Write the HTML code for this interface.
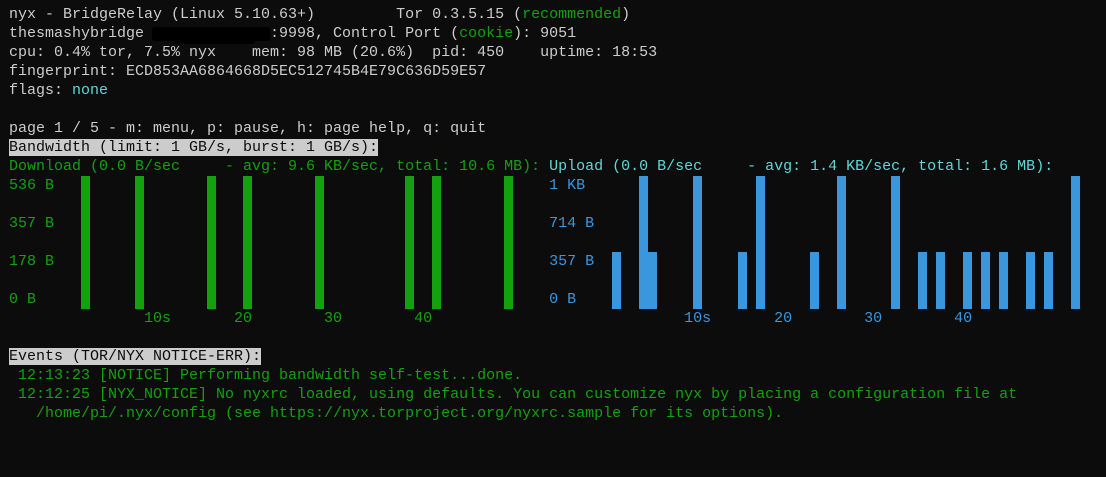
<!DOCTYPE html>
<html><head><meta charset="utf-8"><style>
html,body{margin:0;padding:0;background:#0c0c0c;width:1106px;height:477px;overflow:hidden}
pre{position:absolute;left:9px;top:5px;margin:0;font-family:"Liberation Mono",monospace;font-size:15px;line-height:19px;color:#cccccc;letter-spacing:0}
.g{color:#13a10e}.t{color:#61d6d6}.b{color:#3a96dd}
.hl{background:#cccccc;color:#0c0c0c}
.bar{position:absolute;width:9px}
.gb{background:#13a10e;top:176px;height:133px}
.bt{background:#3a96dd;top:176px;height:133px}
.bs{background:#3a96dd;top:252px;height:57px}
</style></head><body>
<pre>nyx - BridgeRelay (Linux 5.10.63+)         Tor 0.3.5.15 (<span class="g">recommended</span>)
thesmashybridge              :9998, Control Port (<span class="g">cookie</span>): 9051
cpu: 0.4% tor, 7.5% nyx    mem: 98 MB (20.6%)  pid: 450    uptime: 18:53
fingerprint: ECD853AA6864668D5EC512745B4E79C636D59E57
flags: <span class="t">none</span>

page 1 / 5 - m: menu, p: pause, h: page help, q: quit
<span class="hl">Bandwidth (limit: 1 GB/s, burst: 1 GB/s):</span>
<span class="g">Download (0.0 B/sec     - avg: 9.6 KB/sec, total: 10.6 MB):</span> <span class="t">Upload (0.0 B/sec     - avg: 1.4 KB/sec, total: 1.6 MB):</span>
<span class="g">536 B</span>                                                       <span class="b">1 KB</span>

<span class="g">357 B</span>                                                       <span class="b">714 B</span>

<span class="g">178 B</span>                                                       <span class="b">357 B</span>

<span class="g">0 B</span>                                                         <span class="b">0 B</span>
<span class="g">               10s       20        30        40</span>                            <span class="b">10s       20        30        40</span>

<span class="hl">Events (TOR/NYX NOTICE-ERR):</span>
<span class="g"> 12:13:23 [NOTICE] Performing bandwidth self-test...done.</span>
<span class="g"> 12:12:25 [NYX_NOTICE] No nyxrc loaded, using defaults. You can customize nyx by placing a configuration file at</span>
<span class="g">   /home/pi/.nyx/config (see https://nyx.torproject.org/nyxrc.sample for its options).</span></pre>
<div style="position:absolute;left:152px;top:27px;width:118px;height:14px;background:#000;border-radius:3px"></div>
<div style="position:absolute;left:175px;top:36px;width:80px;height:8px;background:#000;border-radius:3px"></div>

<div class="bar gb" style="left:81px"></div>
<div class="bar gb" style="left:135px"></div>
<div class="bar gb" style="left:207px"></div>
<div class="bar gb" style="left:243px"></div>
<div class="bar gb" style="left:315px"></div>
<div class="bar gb" style="left:405px"></div>
<div class="bar gb" style="left:432px"></div>
<div class="bar gb" style="left:504px"></div>

<div class="bar bs" style="left:612px"></div>
<div class="bar bt" style="left:639px"></div>
<div class="bar bs" style="left:648px"></div>
<div class="bar bt" style="left:693px"></div>
<div class="bar bs" style="left:738px"></div>
<div class="bar bt" style="left:756px"></div>
<div class="bar bs" style="left:810px"></div>
<div class="bar bt" style="left:837px"></div>
<div class="bar bt" style="left:891px"></div>
<div class="bar bs" style="left:918px"></div>
<div class="bar bs" style="left:936px"></div>
<div class="bar bs" style="left:963px"></div>
<div class="bar bs" style="left:981px"></div>
<div class="bar bs" style="left:999px"></div>
<div class="bar bs" style="left:1026px"></div>
<div class="bar bs" style="left:1044px"></div>
<div class="bar bt" style="left:1071px"></div>
</body></html>
